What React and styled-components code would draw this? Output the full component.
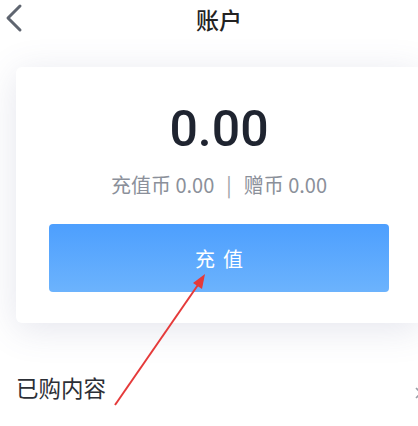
import React from "react";
import styled, { createGlobalStyle } from "styled-components";

const Global = createGlobalStyle`
  html, body { margin: 0; padding: 0; background: #fff; overflow: hidden; }
  body { font-family: "Noto Sans CJK SC", "Noto Sans", sans-serif; }
`;

const Page = styled.div`
  position: relative;
  width: 438px;
  height: 426px;
  background: #fff;
  overflow: hidden;
`;

const Header = styled.div`
  height: 38px;
  display: flex;
  align-items: center;
  justify-content: center;
  position: relative;
`;

const Back = styled.div`
  position: absolute;
  left: 3px;
  top: 3px;
  width: 20px;
  height: 30px;
  display: flex;
  align-items: center;
`;

const Title = styled.h1`
  margin: 0;
  font-size: 23px;
  font-weight: 500;
  color: #222;
  line-height: 36px;
`;

const Body = styled.div`
  padding: 29px 16px 0;
`;

const Card = styled.div`
  background: #fff;
  border-radius: 6px;
  height: 256px;
  box-shadow: 0 6px 36px rgba(90, 95, 140, 0.16);
  display: flex;
  flex-direction: column;
  align-items: center;
  padding: 0 33px;
  box-sizing: border-box;
`;

const Amount = styled.div`
  margin-top: 38px;
  font-family: Roboto, "Liberation Sans", sans-serif;
  font-weight: 500;
  font-size: 50px;
  line-height: 48px;
  letter-spacing: 0px;
  color: #1f2430;
`;

const Sub = styled.div`
  margin-top: 17px;
  font-size: 20px;
  line-height: 30px;
  color: #8b909a;
  display: flex;
  align-items: center;
  gap: 12px;
`;

const Sep = styled.span`
  color: #9a9ea6;
`;

const Button = styled.button`
  margin-top: 24px;
  width: 100%;
  height: 68px;
  flex-shrink: 0;
  border: none;
  border-radius: 4px;
  background: linear-gradient(180deg, #4d9ffe 0%, #6cb3fd 100%);
  color: #fff;
  font-family: "Noto Sans CJK SC", sans-serif;
  font-size: 20px;
  letter-spacing: 8px;
  text-indent: 8px;
  padding: 0;
`;

const Row = styled.div`
  margin-top: 44px;
  display: flex;
  align-items: center;
  justify-content: space-between;
  height: 40px;
`;

const RowLabel = styled.span`
  font-size: 22.5px;
  color: #2c2f36;
`;

const Chevron = styled.svg`
  margin-right: -1px;
  margin-top: 12px;
`;

const Annotation = styled.svg`
  position: absolute;
  left: 0;
  top: 0;
  pointer-events: none;
`;

export default function App() {
  return (
    <>
      <Global />
      <Page>
        <Header>
          <Back>
            <svg width="20" height="30" viewBox="0 0 20 30">
              <path d="M17 3 L5 15 L17 27" fill="none" stroke="#5f6570" strokeWidth="3" strokeLinecap="round" strokeLinejoin="round" />
            </svg>
          </Back>
          <Title>账户</Title>
        </Header>
        <Body>
          <Card>
            <Amount>0.00</Amount>
            <Sub>
              <span>充值币 0.00</span>
              <Sep>|</Sep>
              <span>赠币 0.00</span>
            </Sub>
            <Button>充值</Button>
          </Card>
          <Row>
            <RowLabel>已购内容</RowLabel>
            <Chevron width="8" height="12" viewBox="0 0 8 12">
              <path d="M1 1 L6 6 L1 11" fill="none" stroke="#9aa0a8" strokeWidth="1.6" />
            </Chevron>
          </Row>
        </Body>
        <Annotation width="418" height="426" viewBox="0 0 418 426">
          <line x1="115" y1="405" x2="200" y2="282" stroke="#e53a3a" strokeWidth="2" />
          <polygon points="205,274 193,283 202,289" fill="#e53a3a" />
        </Annotation>
      </Page>
    </>
  );
}
